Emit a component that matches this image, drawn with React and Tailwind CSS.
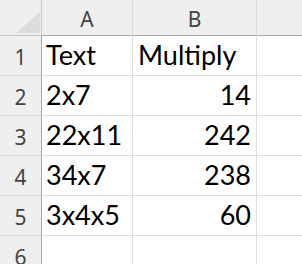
export default function App() {
  const rows = [
    ["Text", "Multiply", false],
    ["2x7", "14", true],
    ["22x11", "242", true],
    ["34x7", "238", true],
    ["3x4x5", "60", true],
    ["", "", true],
  ];
  const hdr = "font-['Noto_Sans',sans-serif] text-[21px] leading-none text-[#444]";
  const cell = "font-['Lato',sans-serif] text-[27px] leading-none text-black";
  return (
    <div className="w-[302px] h-[264px] overflow-hidden bg-white">
      <div className="grid grid-cols-[42px_91px_124px_1fr] grid-rows-[36px_repeat(6,40px)]">
        <div className="relative bg-[#efefef] border-b border-r border-[#c8c8c8]">
          <svg className="absolute left-[16px] top-[12px]" width="24" height="21" viewBox="0 0 24 21">
            <polygon points="24,0 24,21 0,21" fill="#dcdcdc" />
          </svg>
        </div>
        <div className={`bg-[#efefef] border-b border-r border-b-[#a8a8a8] border-r-[#dadada] flex items-end justify-center pb-[5px] ${hdr}`}>A</div>
        <div className={`bg-[#efefef] border-b border-r border-b-[#a8a8a8] border-r-[#dadada] flex items-end justify-center pb-[5px] ${hdr}`}>B</div>
        <div className="bg-[#efefef] border-b border-b-[#a8a8a8]"></div>
        {rows.map((r, i) => (
          <>
            <div key={"h" + i} className={`bg-[#efefef] border-r border-b border-r-[#a8a8a8] border-b-[#dadada] flex items-end justify-center pb-[7px] ${hdr}`}>{i + 1}</div>
            <div key={"a" + i} className={`border-r border-b border-[#dedede] flex items-end pl-[4px] pb-[7px] ${cell}`}>
              <span>{r[0]}</span>
            </div>
            <div key={"b" + i} className={`border-r border-b border-[#dedede] flex items-end ${r[2] ? "justify-end pr-[5px]" : "justify-start pl-[5px]"} pb-[7px] ${cell}`}>
              <span>{r[1]}</span>
            </div>
            <div key={"c" + i} className="border-b border-[#dedede]"></div>
          </>
        ))}
      </div>
    </div>
  );
}
